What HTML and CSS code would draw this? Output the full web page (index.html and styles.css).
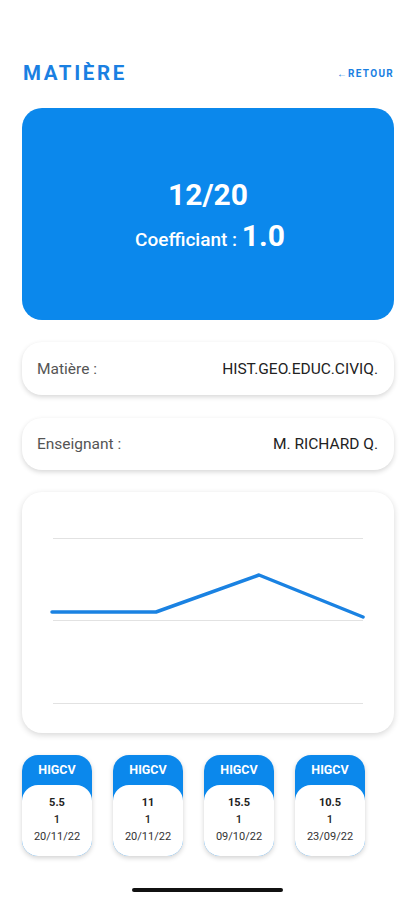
FILE: index.html
```html
<!DOCTYPE html>
<html lang="fr">
<head>
<meta charset="utf-8">
<link rel="stylesheet" href="styles.css">
</head>
<body>
<div class="page">
  <header class="top">
    <h1 class="title">MATIÈRE</h1>
    <a class="back"><span class="arrow">&larr;</span>RETOUR</a>
  </header>

  <section class="hero">
    <div class="grade">12/20</div>
    <div class="coef">Coefficiant : <span class="coef-val">1.0</span></div>
  </section>

  <div class="info">
    <span class="label">Matière :</span>
    <span class="value">HIST.GEO.EDUC.CIVIQ.</span>
  </div>
  <div class="info">
    <span class="label">Enseignant :</span>
    <span class="value">M. RICHARD Q.</span>
  </div>

  <section class="chart">
    <svg width="372" height="241" viewBox="0 0 372 241">
      <line x1="31" y1="46.5" x2="341" y2="46.5" class="grid"/>
      <line x1="31" y1="128.5" x2="341" y2="128.5" class="grid"/>
      <line x1="31" y1="211.5" x2="341" y2="211.5" class="grid"/>
      <polyline points="30,120 134,120 237,83 341,125" class="curve"/>
    </svg>
  </section>

  <div class="notes">
    <div class="note">
      <div class="note-head">HIGCV</div>
      <div class="note-body"><b>5.5</b><span class="mid">1</span><span>20/11/22</span></div>
    </div>
    <div class="note">
      <div class="note-head">HIGCV</div>
      <div class="note-body"><b>11</b><span class="mid">1</span><span>20/11/22</span></div>
    </div>
    <div class="note">
      <div class="note-head">HIGCV</div>
      <div class="note-body"><b>15.5</b><span class="mid">1</span><span>09/10/22</span></div>
    </div>
    <div class="note">
      <div class="note-head">HIGCV</div>
      <div class="note-body"><b>10.5</b><span class="mid">1</span><span>23/09/22</span></div>
    </div>
  </div>

  <div class="home-bar"></div>
</div>
</body>
</html>
```

FILE: styles.css
```css
* { box-sizing: border-box; }
html, body {
  margin: 0;
  padding: 0;
  background: #ffffff;
  font-family: Roboto, "Noto Sans", "Liberation Sans", sans-serif;
}
.page {
  width: 415px;
  height: 900px;
  padding: 58px 21px 0 22px;
  display: flex;
  flex-direction: column;
}
.top {
  height: 30px;
  display: flex;
  align-items: center;
  justify-content: space-between;
  margin-bottom: 20px;
}
.title {
  margin: 0;
  font-size: 20.5px;
  font-weight: 700;
  letter-spacing: 2.6px;
  color: #1a80e2;
  padding-left: 1px;
}
.back {
  font-size: 10px;
  font-weight: 700;
  letter-spacing: 1.3px;
  color: #1a80e2;
  display: flex;
  align-items: center;
  padding-top: 1px;
}
.arrow {
  font-size: 10px;
  margin-right: 1px;
  letter-spacing: 0;
  font-weight: 700;
}
.hero {
  height: 212px;
  border-radius: 20px;
  background: #0b88ec;
  color: #ffffff;
  display: flex;
  flex-direction: column;
  align-items: center;
  justify-content: center;
  padding-top: 6px;
}
.grade {
  font-size: 30px;
  font-weight: 700;
  line-height: 34px;
}
.coef {
  font-size: 19px;
  font-weight: 500;
  margin-top: 8px;
  line-height: 32px;
  padding-left: 4px;
}
.coef-val {
  font-size: 30px;
  font-weight: 700;
}
.info {
  height: 53px;
  margin-top: 22px;
  border-radius: 20px;
  background: #ffffff;
  box-shadow: 0 2px 5px rgba(0, 0, 0, 0.16);
  display: flex;
  align-items: center;
  justify-content: space-between;
  padding: 0 16px 0 15px;
  font-size: 15.5px;
}
.info + .info { height: 52px; margin-top: 23px; }
.label { color: #555555; }
.value { color: #222222; }
.chart {
  height: 241px;
  margin-top: 22px;
  border-radius: 20px;
  background: #ffffff;
  box-shadow: 0 2px 6px rgba(0, 0, 0, 0.16);
  overflow: hidden;
}
.chart svg { display: block; }
.grid { stroke: #e2e2e2; stroke-width: 1; }
.curve {
  fill: none;
  stroke: #1a82e2;
  stroke-width: 3.5;
  stroke-linecap: round;
  stroke-linejoin: round;
}
.notes {
  margin-top: 22px;
  display: flex;
  gap: 21px;
}
.note {
  width: 70px;
  height: 101px;
  border-radius: 16px;
  background: #0b88ec;
  box-shadow: 0 2px 5px rgba(0, 0, 0, 0.18);
  display: flex;
  flex-direction: column;
}
.note-head {
  height: 30px;
  color: #ffffff;
  font-size: 12.5px;
  font-weight: 700;
  text-align: center;
  line-height: 30px;
}
.note-body {
  flex: 1;
  background: #ffffff;
  border-radius: 16px;
  display: flex;
  flex-direction: column;
  align-items: center;
  justify-content: center;
  gap: 4px;
  font-size: 11px;
  color: #333333;
  padding-bottom: 2px;
}
.note-body b { font-weight: 700; color: #222; }
.note-body .mid { font-weight: 500; color: #222; }
.home-bar {
  width: 151px;
  height: 4px;
  border-radius: 2px;
  background: #111111;
  margin: 32px 0 0 110px;
}
```
